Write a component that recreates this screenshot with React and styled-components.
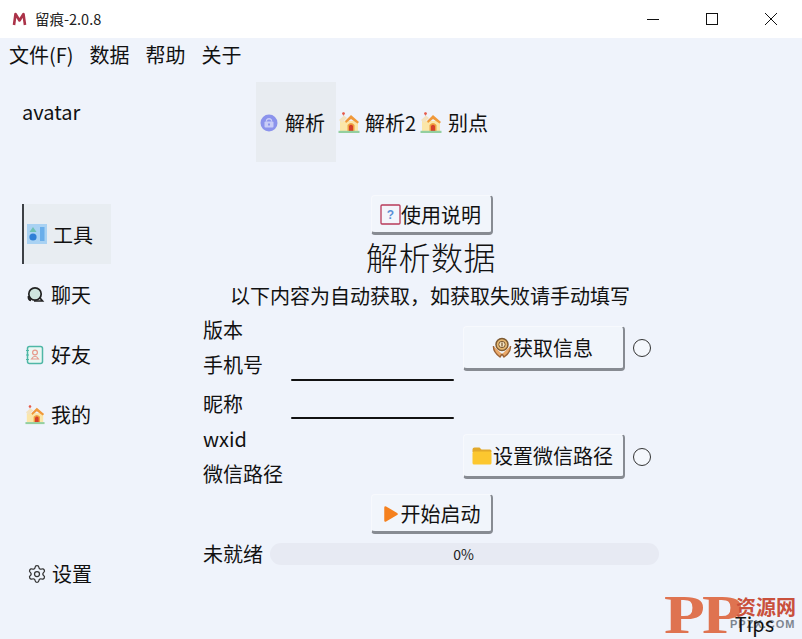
import React from 'react';
import styled, { createGlobalStyle } from 'styled-components';
import { Settings } from 'lucide-react';

const Global = createGlobalStyle`
  html, body { margin: 0; padding: 0; }
  body { font-family: "Noto Sans CJK SC", "Noto Sans", sans-serif; color: #111; }
  * { box-sizing: border-box; }
`;

const Win = styled.div`
  width: 802px; height: 639px; overflow: hidden; position: relative;
  display: flex; flex-direction: column; background: #eff3fb;
  font-size: 20px; line-height: 28px;
`;
const TitleBar = styled.div`
  height: 38px; flex: none; background: #fff; display: flex; align-items: center;
  padding-left: 12px; font-size: 14.5px; color: #222;
`;
const TitleText = styled.span`margin-left: 8px;`;
const WinControls = styled.div`margin-left: auto; display: flex; margin-right: 2px;`;
const WinBtn = styled.div`width: 59px; height: 38px; display: flex; align-items: center; justify-content: center;`;
const MenuBar = styled.div`
  height: 34px; flex: none; display: flex; gap: 16px; padding-left: 9px; align-items: center;
`;
const Body = styled.div`flex: 1; display: flex; min-height: 0;`;
const Sidebar = styled.div`
  width: 203px; flex: none; display: flex; flex-direction: column; padding: 0 0 35px 22px;
`;
const Avatar = styled.div`height: 132px; padding-top: 26px; flex: none;`;
const NavItem = styled.div`
  width: 89px; height: 60px; flex: none; display: flex; align-items: center; gap: 6px;
  padding: 2px 0 0 3px;
  ${p => p.$active && `background: #e8edf2; border-left: 2px solid #3c4045; padding-top: 0; padding-left: 3px;`}
  ${p => p.$active && `& > span { margin-top: 2px; }`}
`;
const Spacer = styled.div`flex: 1;`;
const SettingsItem = styled(NavItem)`padding: 0 0 0 5px; gap: 5px; svg { color: #333; }`;
const Main = styled.div`flex: 1; display: flex; flex-direction: column; padding-top: 10px; min-width: 0;`;
const Tabs = styled.div`display: flex; margin-left: 53px; height: 80px; flex: none;`;
const Tab = styled.div`
  height: 80px; display: flex; align-items: center; gap: ${p => p.$gap || 5}px; padding: 2px 2px 0 ${p => p.$pl || 2}px;
  ${p => p.$active && `background: #e8ecf1; width: 80px; padding: 2px 0 0 4px; gap: 7px;`}
`;
const Content = styled.div`width: 456px; display: flex; flex-direction: column; align-items: center; flex: none; padding-top: 33px;`;
const RaisedButton = styled.button`
  font: inherit; color: #111; background: #f1f5fb; padding: 1px ${p => p.$pr || 0}px 0 0;
  width: ${p => p.$wide ? '162px' : '122px'}; height: ${p => p.$wide ? '45px' : '40px'}; flex: none;
  border: 1px solid #f7f9fd; border-right: 2px solid #878b92; border-bottom: 3px solid #878b92;
  border-radius: 4px; display: flex; align-items: center; justify-content: center; gap: ${p => p.$gap ?? 1}px; margin-left: ${p => p.$shift || 0}px;
`;
const Title = styled.div`font-size: 32px; line-height: 42px; font-weight: 300; height: 44px; letter-spacing: .5px;`;
const Hint = styled.div`height: 28px; line-height: 28px; margin-top: 3px; margin-left: -2px;`;
const Form = styled.div`
  width: 456px; display: grid; margin-top: 2px;
  grid-template-columns: 88px 163px 171px 1fr;
  grid-template-rows: 36px 37px 37px 35px 35px;
`;
const Label = styled.div`grid-column: 1; grid-row: ${p => p.$row}; align-self: center; margin-top: ${p => p.$mt || 0}px;`;
const Field = styled.div`
  grid-column: 2; grid-row: ${p => p.$row}; align-self: end; height: 2px; background: #111; border-radius: 2px; margin-bottom: ${p => p.$mb}px;
`;
const ActionCell = styled.div`
  grid-column: 3; grid-row: ${p => p.$row}; display: flex; align-items: center; margin-left: 9px; margin-top: -1px;
`;
const RadioCell = styled.div`
  grid-column: 4; grid-row: ${p => p.$row}; display: flex; align-items: center; margin-left: 8px; margin-top: -1px;
`;
const Radio = styled.div`width: 18px; height: 18px; border-radius: 50%; border: 1.5px solid #333; background: #f4f7fc;`;
const StartRow = styled.div`margin-top: 2px; height: 40px;`;
const ProgressRow = styled.div`width: 456px; display: flex; align-items: center; margin-top: 6px; gap: 7px; height: 28px;`;
const Track = styled.div`
  flex: 1; height: 22px; border-radius: 11px; background: #e7eaf3; font-size: 14px; line-height: 22px; text-align: center; color: #222; padding-right: 2px;
`;
const TipsRow = styled.div`margin-top: auto; margin-right: 28px; margin-bottom: 2px; align-self: flex-end; position: relative; z-index: 2; line-height: 26px;`;
const Watermark = styled.div`
  position: absolute; left: 664px; top: 592px; width: 136px; height: 46px; pointer-events: none;
`;
const BigP = styled.span`
  position: absolute; top: 0; left: ${p => p.$x}px; font: bold 50px/46px "Liberation Serif", serif; color: #df7350;
  transform: scale(1.34, 1.08); transform-origin: left center;
`;
const Cn = styled.span`
  position: absolute; left: 72px; top: 3px; font: bold 20px/24px "Noto Sans CJK SC", sans-serif; color: #c9503c;
`;
const Com = styled.span`
  position: absolute; left: 66px; top: 25px; font: bold 11px/14px "Liberation Sans", sans-serif; color: #7d8590; letter-spacing: 1px;
`;

const Logo = () => (
  <svg width="15" height="15" viewBox="0 0 15 15"><path d="M2 13 L3.5 2 L7.5 8.5 L11.5 2 L13 13" fill="none" stroke="#ab3349" strokeWidth="2.6" strokeLinejoin="round"/></svg>
);
const House = ({ s = 22 }) => (
  <svg width={s} height={s} viewBox="0 0 22 22">
    <path d="M5.5 0.5 V4" stroke="#d9a0a0" strokeWidth="0.8"/>
    <circle cx="5.5" cy="1.6" r="1.4" fill="#e65a4a"/>
    <rect x="2" y="9" width="18" height="10" fill="#fbe6a8"/>
    <path d="M1 8 L6 3.5 L9 6 L4 11 Z" fill="#f3e3c0"/>
    <path d="M7 9 L13 3 L21 10 L19.5 11.5 L13 7 L8 11 Z" fill="#f0993a"/>
    <path d="M9.5 19 V13 Q13 9 16.5 13 V19 Z" fill="#f0a040"/>
    <path d="M11 19 V14 Q13 11.5 15 14 V19 Z" fill="#d63f2a"/>
    <rect x="0.5" y="18.8" width="21" height="2.2" fill="#93cf9f"/>
  </svg>
);
const Lock = () => (
  <svg width="18" height="18" viewBox="0 0 18 18">
    <circle cx="9" cy="9" r="8.5" fill="#8b93ec"/>
    <rect x="4.5" y="7.5" width="9" height="6" rx="1" fill="#c9cdf7"/>
    <path d="M6.5 7.5 V6 Q9 3.5 11.5 6 V7.5" fill="none" stroke="#c9cdf7" strokeWidth="1.2"/>
    <rect x="8" y="9.5" width="2" height="2" fill="#8b93ec"/>
  </svg>
);
const Tool = () => (
  <svg width="20" height="20" viewBox="0 0 20 20">
    <rect width="20" height="20" fill="#a9d2f3"/>
    <rect x="13" y="3" width="4.5" height="14" fill="#6aaeea"/>
    <path d="M6 3 L9.5 8 H2.5 Z" fill="#6fc2b2"/>
    <circle cx="6" cy="13" r="3.6" fill="#2f7fd6"/>
  </svg>
);
const Chat = () => (
  <svg width="20" height="20" viewBox="0 0 20 20" fill="none">
    <circle cx="10" cy="9" r="6.2" fill="#cfe6df" stroke="#222" strokeWidth="1.7"/>
    <path d="M15 13 L17.5 16 H9 M3.5 11 Q3 14.5 6 15.5" stroke="#222" strokeWidth="1.7"/>
  </svg>
);
const Contacts = () => (
  <svg width="20" height="20" viewBox="0 0 20 20" fill="none">
    <rect x="2.5" y="1.5" width="15" height="17" rx="2" fill="#eaf7f3" stroke="#4fb7a6" strokeWidth="1.5"/>
    <circle cx="10" cy="7.5" r="2.4" stroke="#e79a8c" strokeWidth="1.2"/>
    <path d="M6.5 14 Q10 8.5 13.5 14 Z" stroke="#e79a8c" strokeWidth="1.2"/>
    <path d="M1 5.5 H4 M1 10 H4 M1 14.5 H4" stroke="#4fb7a6" strokeWidth="1.2"/>
  </svg>
);
const Help = () => (
  <svg width="21" height="21" viewBox="0 0 21 21">
    <rect x="1" y="1" width="19" height="19" rx="1" fill="#f3f5fb" stroke="#b83a5a" strokeWidth="1.3"/>
    <text x="10.5" y="15" textAnchor="middle" fontSize="12" fontWeight="700" fill="#5b8fd6" fontFamily="Liberation Sans">?</text>
  </svg>
);
const Hands = () => (
  <svg width="20" height="22" viewBox="0 0 20 22" fill="none">
    <circle cx="10" cy="7.5" r="6" fill="#e5b770" stroke="#7d5a32" strokeWidth="1.5"/>
    <circle cx="10" cy="7.5" r="3.2" fill="#f4e6c6" stroke="#7d5a32" strokeWidth="1"/>
    <path d="M10 5.5 V9.5" stroke="#7d5a32" strokeWidth="1.3"/>
    <path d="M1.5 9 Q1 15 8 20 L10 17 M18.5 9 Q19 15 12 20 L10 17" fill="#eaa96a" stroke="#9a6236" strokeWidth="1.4"/>
  </svg>
);
const Folder = () => (
  <svg width="20" height="20" viewBox="0 0 20 20">
    <path d="M0.5 3.5 Q0.5 1.5 2.5 1.5 H7.5 L9.5 3.5 H18 Q19.5 3.5 19.5 5 V6 H0.5 Z" fill="#e2a92b"/>
    <rect x="0.5" y="5.5" width="19" height="13" rx="1.5" fill="#fcc72f"/>
  </svg>
);
const Play = () => (
  <svg width="16" height="18" viewBox="0 0 16 18">
    <path d="M2.5 2.5 L13.5 9 L2.5 15.5 Z" fill="#f5811f" stroke="#f5811f" strokeWidth="2.5" strokeLinejoin="round"/>
  </svg>
);

export default function App() {
  return (
    <Win>
      <Global />
      <TitleBar>
        <Logo />
        <TitleText>留痕-2.0.8</TitleText>
        <WinControls>
          <WinBtn><svg width="12" height="12"><path d="M0 6.5 H12" stroke="#111"/></svg></WinBtn>
          <WinBtn><svg width="12" height="12"><rect x=".5" y=".5" width="11" height="11" fill="none" stroke="#111"/></svg></WinBtn>
          <WinBtn><svg width="12" height="12"><path d="M0 0 L12 12 M12 0 L0 12" stroke="#111"/></svg></WinBtn>
        </WinControls>
      </TitleBar>
      <MenuBar>
        <span>文件(F)</span><span>数据</span><span>帮助</span><span>关于</span>
      </MenuBar>
      <Body>
        <Sidebar>
          <Avatar>avatar</Avatar>
          <NavItem $active><Tool /><span>工具</span></NavItem>
          <NavItem><Chat />聊天</NavItem>
          <NavItem><Contacts />好友</NavItem>
          <NavItem><House s={20} />我的</NavItem>
          <Spacer />
          <SettingsItem><Settings size={20} strokeWidth={1.5} />设置</SettingsItem>
        </Sidebar>
        <Main>
          <Tabs>
            <Tab $active><Lock />解析</Tab>
            <Tab $pl={2} $gap={5}><House />解析2</Tab>
            <Tab $pl={2} $gap={6}><House />别点</Tab>
          </Tabs>
          <Content>
            <RaisedButton $shift={2} $gap={0} $pr={2}><Help />使用说明</RaisedButton>
            <Title>解析数据</Title>
            <Hint>以下内容为自动获取，如获取失败请手动填写</Hint>
            <Form>
              <Label $row={1} $mt={-1}>版本</Label>
              <Label $row={2} $mt={-3}>手机号</Label>
              <Field $row={2} $mb={4} />
              <Label $row={3}>昵称</Label>
              <Label $row={4} $mt={-1}>wxid</Label>
              <Field $row={3} $mb={3} />
              <Label $row={5} $mt={-1}>微信路径</Label>
              <ActionCell $row="1 / span 2"><RaisedButton $wide $pr={2}><Hands />获取信息</RaisedButton></ActionCell>
              <RadioCell $row="1 / span 2"><Radio /></RadioCell>
              <ActionCell $row="4 / span 2"><RaisedButton $wide $pr={2}><Folder />设置微信路径</RaisedButton></ActionCell>
              <RadioCell $row="4 / span 2"><Radio /></RadioCell>
            </Form>
            <StartRow><RaisedButton $shift={2} $gap={2}><Play />开始启动</RaisedButton></StartRow>
            <ProgressRow>
              <span>未就绪</span>
              <Track>0%</Track>
            </ProgressRow>
          </Content>
          <TipsRow>Tips</TipsRow>
        </Main>
      </Body>
      <Watermark>
        <BigP $x={0}>P</BigP>
        <BigP $x={38}>P</BigP>
        <Cn>资源网</Cn>
        <Com>PPZX.COM</Com>
      </Watermark>
    </Win>
  );
}
